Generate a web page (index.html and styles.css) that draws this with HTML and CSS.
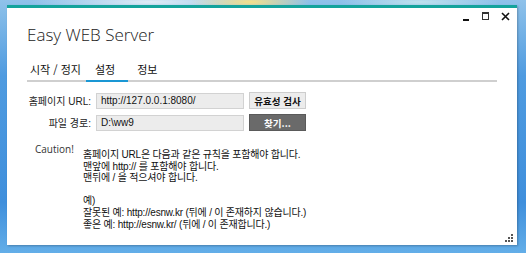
FILE: index.html
```html
<!DOCTYPE html>
<html lang="ko">
<head>
<meta charset="utf-8">
<link rel="stylesheet" href="styles.css">
</head>
<body>
<div class="desktop">
  <div class="window">
    <div class="caption">
      <span class="ctl min"></span>
      <span class="ctl max"></span>
      <span class="ctl close">
        <svg width="9" height="9" viewBox="0 0 9 9"><path d="M1 1 L8 8 M8 1 L1 8" stroke="#111" stroke-width="1.6"/></svg>
      </span>
    </div>
    <h1 class="title">Easy WEB Server</h1>
    <div class="tabs">
      <span class="tab">시작 / 정지</span>
      <span class="tab active">설정</span>
      <span class="tab">정보</span>
    </div>
    <div class="form">
      <label class="lbl">홈페이지 URL:</label>
      <div class="field">http://127.0.0.1:8080/</div>
      <button class="btn light">유효성 검사</button>
      <label class="lbl">파일 경로:</label>
      <div class="field">D:\ww9</div>
      <button class="btn dark">찾기...</button>
    </div>
    <div class="caution">
      <div class="c-label">Caution!</div>
      <div class="c-text">
        <p>홈페이지 URL은 다음과 같은 규칙을 포함해야 합니다.</p>
        <p>맨앞에 http:// 를 포함해야 합니다.</p>
        <p>맨뒤에 / 을 적으셔야 합니다.</p>
        <p>&nbsp;</p>
        <p>예)</p>
        <p>잘못된 예: http://esnw.kr (뒤에 / 이 존재하지 않습니다.)</p>
        <p>좋은 예: http://esnw.kr/ (뒤에 / 이 존재합니다.)</p>
      </div>
    </div>
    <div class="grip">
      <i></i><i></i><i></i><i></i><i></i><i></i>
    </div>
  </div>
</div>
</body>
</html>
```
FILE: styles.css
```css
html, body { margin: 0; padding: 0; }
body {
  width: 526px; height: 253px; overflow: hidden;
  font-family: "Noto Sans CJK KR", "Noto Sans", sans-serif;
}
.desktop {
  width: 526px; height: 253px;
  box-sizing: border-box;
  padding: 5px 0 0 7px;
  background:
    radial-gradient(ellipse 60px 10px at 250px 2px, #f4e08a 0%, rgba(244,224,138,0) 100%),
    radial-gradient(ellipse 120px 10px at 150px 2px, #e0ecf6 0%, rgba(224,236,246,0) 100%),
    radial-gradient(ellipse 80px 8px at 420px 2px, #bfe2ee 0%, rgba(191,226,238,0) 100%),
    linear-gradient(180deg, #8fc2ea 0%, #4f9be0 30%, #3f8fdc 80%, #63aee8 100%);
}
.window {
  position: relative;
  width: 510px; height: 237px;
  background: #fff;
  border-top: 3px solid #13a39c;
  box-shadow: 1px 1px 2px rgba(0,0,0,0.25);
  display: flex; flex-direction: column;
}
.caption {
  display: flex; justify-content: flex-end; align-items: center;
  gap: 11px;
  height: 10px;
  padding: 3px 7px 0 0;
}
.ctl { width: 9px; height: 9px; display: flex; align-items: center; justify-content: center; }
.ctl.min::before { content: ""; width: 6px; height: 2px; background: #111; margin-top: 7px; }
.ctl.max::before { content: ""; width: 5px; height: 5px; border: 1.5px solid #333; border-top-width: 2px; }
.title {
  margin: 3px 0 0 20px;
  font-family: "Open Sans", sans-serif;
  font-weight: 300;
  font-size: 17px;
  line-height: 22px;
  color: #222;
}
.tabs {
  display: flex;
  margin: 16px 20px 0 20px;
  border-bottom: 2px solid #cfcfcf;
  font-size: 11px;
  color: #111;
}
.tab { padding: 0 5px 3px 3px; line-height: 15px; margin-bottom: -2px; border-bottom: 2px solid transparent; }
.tab.active { border-bottom-color: #1a97d4; padding: 0 13px 3px 9px; }
.tab:last-child { padding-left: 9px; }
.form {
  display: grid;
  grid-template-columns: 64px 148px 57px;
  column-gap: 5px; row-gap: 5px;
  margin: 10px 0 0 20px;
  align-items: center;
  font-family: "Liberation Sans", "Noto Sans CJK KR", sans-serif;
  font-size: 10px;
}
.lbl { text-align: right; color: #222; }
.field {
  height: 16px; box-sizing: border-box;
  background: #ececec; border: 1px solid #d2d2d2;
  padding: 0 4px; line-height: 14px; color: #111;
}
.btn {
  height: 17px; box-sizing: border-box; padding: 0;
  font-family: "Noto Sans CJK KR", sans-serif; font-weight: 700; font-size: 9.5px;
  line-height: 14px;
}
.btn.light { background: #ececec; border: 1px solid #cdcdcd; color: #111; }
.btn.dark { background: #6a6a6a; border: 1px solid #5a5a5a; color: #fff; }
.caution {
  display: grid;
  grid-template-columns: 48px auto;
  margin: 12px 0 0 28px;
  font-family: "Liberation Sans", "Noto Sans CJK KR", sans-serif;
  font-size: 10px;
  color: #111;
}
.c-label { font-family: "Open Sans", sans-serif; font-size: 10px; color: #333; line-height: 12px; }
.c-text { padding-top: 6px; }
.c-text p { margin: 0; line-height: 11.6px; letter-spacing: -0.2px; }
.grip {
  position: absolute; right: 4px; bottom: 3px;
  width: 8px; height: 8px;
  display: grid; grid-template-columns: repeat(3, 2px); grid-template-rows: repeat(3, 2px); gap: 1px;
}
.grip i { background: #555; }
.grip i:nth-child(1) { grid-column: 3; grid-row: 1; }
.grip i:nth-child(2) { grid-column: 2; grid-row: 2; }
.grip i:nth-child(3) { grid-column: 3; grid-row: 2; }
.grip i:nth-child(4) { grid-column: 1; grid-row: 3; }
.grip i:nth-child(5) { grid-column: 2; grid-row: 3; }
.grip i:nth-child(6) { grid-column: 3; grid-row: 3; }
```
